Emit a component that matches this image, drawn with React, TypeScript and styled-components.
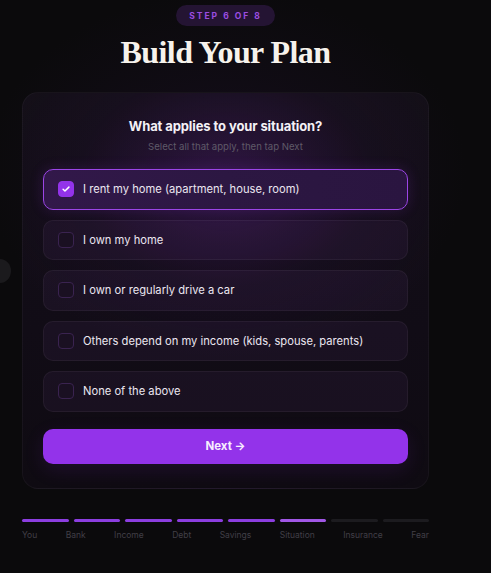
import React, { useState } from 'react';
import styled, { createGlobalStyle } from 'styled-components';

const GlobalStyle = createGlobalStyle`
  html, body {
    margin: 0;
    padding: 0;
    background: #0b0a0c;
  }
  body {
    font-family: Inter, "Noto Sans", sans-serif;
    -webkit-font-smoothing: antialiased;
  }
`;

const Page = styled.div`
  position: relative;
  min-height: 573px;
  background: radial-gradient(ellipse 70% 45% at 46% 30%, #150d1c 0%, #0b0a0c 70%);
  overflow: hidden;
`;

const Column = styled.div`
  width: 407px;
  margin-left: 22px;
  padding-top: 5px;
  display: flex;
  flex-direction: column;
  align-items: center;
`;

const StepPill = styled.div`
  height: 21px;
  padding: 0 13px;
  border-radius: 999px;
  background: #241433;
  color: #9b4de0;
  font-size: 8.5px;
  font-weight: 700;
  letter-spacing: 2px;
  display: flex;
  align-items: center;
`;

const Title = styled.h1`
  margin: 7px 0 0;
  font-family: "Liberation Serif", "DejaVu Serif", serif;
  font-weight: 700;
  font-size: 32px;
  letter-spacing: -0.6px;
  line-height: 38px;
  color: #f6f2ec;
`;

const Card = styled.div`
  box-sizing: border-box;
  width: 100%;
  margin-top: 21px;
  padding: 23px 20px 24px;
  border-radius: 16px;
  border: 1px solid rgba(255, 255, 255, 0.04);
  background:
    radial-gradient(ellipse 60% 45% at 50% 22%, rgba(120, 40, 180, 0.28) 0%, rgba(60, 20, 90, 0.1) 60%, transparent 100%),
    linear-gradient(180deg, #130f17 0%, #110c16 60%, #0f0b12 100%);
`;

const Question = styled.h2`
  margin: 0;
  text-align: center;
  font-size: 13px;
  font-weight: 700;
  letter-spacing: -0.1px;
  color: #f4f1f6;
  line-height: 20px;
`;

const Hint = styled.p`
  margin: 3px 0 0;
  text-align: center;
  font-size: 9.6px;
  color: #5f5a68;
  line-height: 16px;
`;

const OptionList = styled.div`
  margin-top: 14px;
  display: flex;
  flex-direction: column;
  gap: 10px;
`;

const Option = styled.button<{ $checked: boolean }>`
  box-sizing: border-box;
  height: 40.5px;
  width: 100%;
  padding: 0 14px;
  display: flex;
  align-items: center;
  gap: 9px;
  border-radius: 10px;
  cursor: pointer;
  text-align: left;
  font-family: inherit;
  font-size: 11.2px;
  color: #ebe6f0;
  border: 1px solid ${({ $checked }) => ($checked ? '#9b45e6' : 'rgba(255, 255, 255, 0.05)')};
  background: ${({ $checked }) =>
    $checked
      ? 'linear-gradient(90deg, #32184a 0%, #2c1742 50%, #2a1540 100%)'
      : 'rgba(150, 80, 200, 0.07)'};
  box-shadow: ${({ $checked }) => ($checked ? '0 0 14px rgba(147, 51, 234, 0.18)' : 'none')};
`;

const Box = styled.span<{ $checked: boolean }>`
  box-sizing: border-box;
  flex: none;
  width: 16px;
  height: 16px;
  border-radius: 4px;
  display: flex;
  align-items: center;
  justify-content: center;
  background: ${({ $checked }) => ($checked ? '#9333ea' : '#1a1022')};
  border: 1.5px solid ${({ $checked }) => ($checked ? '#9333ea' : '#3a2350')};

  svg {
    width: 10px;
    height: 10px;
  }
`;

const NextButton = styled.button`
  margin-top: 17px;
  width: 100%;
  height: 35px;
  border: none;
  border-radius: 10px;
  background: #9333ea;
  color: #f7eefe;
  font-family: inherit;
  font-size: 11.5px;
  font-weight: 700;
  cursor: pointer;
  box-shadow: 0 6px 20px rgba(147, 51, 234, 0.12);
`;

const Progress = styled.div`
  width: 100%;
  margin-top: 30px;
`;

const Bars = styled.div`
  display: flex;
  gap: 5px;
`;

const Bar = styled.div<{ $state: 'done' | 'current' | 'todo' }>`
  flex: 1;
  height: 3px;
  border-radius: 2px;
  background: ${({ $state }) =>
    $state === 'done' ? '#8c3ee0' : $state === 'current' ? '#a157e6' : '#1c1b1f'};
`;

const Labels = styled.div`
  margin-top: 8px;
  display: flex;
  justify-content: space-between;
  font-size: 8.5px;
  color: #413f47;
`;

const SideHandle = styled.div`
  position: absolute;
  left: -11px;
  top: 259px;
  width: 22px;
  height: 24px;
  border-radius: 50%;
  background: #1b1a1d;
`;

const options = [
  'I rent my home (apartment, house, room)',
  'I own my home',
  'I own or regularly drive a car',
  'Others depend on my income (kids, spouse, parents)',
  'None of the above',
];

const steps = ['You', 'Bank', 'Income', 'Debt', 'Savings', 'Situation', 'Insurance', 'Fear'];

const Check = () => (
  <svg viewBox="0 0 24 24" fill="none" stroke="#fff" strokeWidth="3.5" strokeLinecap="round" strokeLinejoin="round">
    <path d="M5 12.5l4.5 4.5L19 7.5" />
  </svg>
);

export default function App() {
  const [selected, setSelected] = useState<number[]>([0]);

  const toggle = (i: number) =>
    setSelected((s) => (s.includes(i) ? s.filter((x) => x !== i) : [...s, i]));

  return (
    <Page>
      <GlobalStyle />
      <SideHandle />
      <Column>
        <StepPill>STEP 6 OF 8</StepPill>
        <Title>Build Your Plan</Title>

        <Card>
          <Question>What applies to your situation?</Question>
          <Hint>Select all that apply, then tap Next</Hint>

          <OptionList>
            {options.map((label, i) => {
              const checked = selected.includes(i);
              return (
                <Option key={label} $checked={checked} onClick={() => toggle(i)}>
                  <Box $checked={checked}>{checked && <Check />}</Box>
                  {label}
                </Option>
              );
            })}
          </OptionList>

          <NextButton>Next →</NextButton>
        </Card>

        <Progress>
          <Bars>
            {steps.map((s, i) => (
              <Bar key={s} $state={i < 5 ? 'done' : i === 5 ? 'current' : 'todo'} />
            ))}
          </Bars>
          <Labels>
            {steps.map((s) => (
              <span key={s}>{s}</span>
            ))}
          </Labels>
        </Progress>
      </Column>
    </Page>
  );
}
